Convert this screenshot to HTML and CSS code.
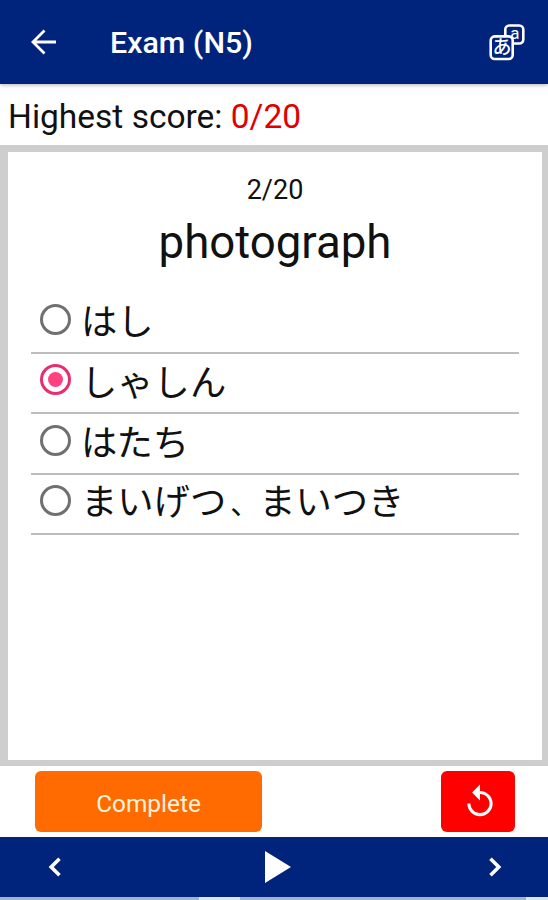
FILE: index.html
```html
<!DOCTYPE html>
<html lang="en">
<head>
<meta charset="utf-8">
<title>Exam (N5)</title>
<link rel="stylesheet" href="styles.css">
</head>
<body>
<div class="app">
  <header class="topbar">
    <svg class="back" width="26" height="26" viewBox="0 0 26 26"><path d="M25 13H2M13.500 1.500L2 13L13.500 24.500"/></svg>
    <h1 class="title">Exam (N5)</h1>
    <svg class="lang" width="36" height="37" viewBox="0 0 36 37">
      <rect class="box" x="16.3" y="1.5" width="18" height="18" rx="4"/>
      <text class="latin" x="25.800" y="15.300">a</text>
      <rect class="box front" x="1.7" y="12.4" width="22" height="22.6" rx="4"/>
      <text class="kana" x="12.9" y="30.300">あ</text>
    </svg>
  </header>
  <p class="score">Highest score: <span class="value">0/20</span></p>
  <main class="frame">
    <section class="card">
      <p class="count">2/20</p>
      <h2 class="word">photograph</h2>
      <ul class="options" lang="ja">
        <li class="option"><span class="radio"></span><span class="label">はし</span></li>
        <li class="option"><span class="radio checked"></span><span class="label">しゃしん</span></li>
        <li class="option"><span class="radio"></span><span class="label">はたち</span></li>
        <li class="option"><span class="radio"></span><span class="label">まいげつ<span class="comma">、</span>まいつき</span></li>
      </ul>
    </section>
  </main>
  <div class="actions">
    <button class="btn complete">Complete</button>
    <button class="btn reset" aria-label="Restart">
      <svg width="38" height="38" viewBox="0 0 24 24"><path fill="#fff" d="M12 5V1L7 6l5 5V7c3.310 0 6 2.690 6 6s-2.690 6-6 6-6-2.690-6-6H4c0 4.420 3.580 8 8 8s8-3.580 8-8-3.580-8-8-8z"/></svg>
    </button>
  </div>
  <nav class="bottombar">
    <svg class="prev" width="14" height="20" viewBox="0 0 14 20"><path d="M11.500 1.800L3.200 10l8.300 8.200"/></svg>
    <svg class="play" width="26" height="32" viewBox="0 0 26 32"><path d="M0 0L26 16L0 32z"/></svg>
    <svg class="next" width="14" height="20" viewBox="0 0 14 20"><path d="M2.500 1.800L10.800 10l-8.300 8.200"/></svg>
  </nav>
  <div class="edge"></div>
</div>
</body>
</html>
```
FILE: styles.css
```css
* { box-sizing: border-box; margin: 0; padding: 0; }
body { font-family: Roboto, "Noto Sans CJK JP", sans-serif; background: #fff; color: #111; }
.app { width: 548px; height: 900px; display: flex; flex-direction: column; overflow: hidden; }
.topbar { height: 84px; flex: none; display: flex; align-items: center; padding: 0 23px 0 31px; background: #00237b; color: #fff; box-shadow: 0 1px 4px rgba(0,0,0,.3); z-index: 1; }
.back { fill: none; stroke: #fff; stroke-width: 2.8; }
.title { flex: 1; margin-left: 53px; padding-top: 2px; font-size: 30.4px; line-height: 36px; font-weight: 500; }
.box { fill: none; stroke: #fff; stroke-width: 2.6; }
.front { fill: #00237b; }
.lang text { fill: #fff; text-anchor: middle; }
.latin { font: 17px Roboto, sans-serif; }
.kana { font: 500 19px "Noto Sans CJK JP", sans-serif; }
.score { height: 61px; flex: none; padding: 2px 0 0 8px; font-size: 33.5px; line-height: 61px; white-space: nowrap; }
.value { color: #e00000; }
.frame { height: 621px; flex: none; padding: 7px 6px 6px 8px; background: #cecece; }
.card { height: 100%; background: #fff; padding: 20px 23px 0; text-align: center; }
.count { font-size: 27px; line-height: 36px; }
.word { padding-top: 3px; font-size: 45.6px; line-height: 64px; font-weight: 400; }
.options { list-style: none; margin-top: 18px; text-align: left; }
.option { height: 60.5px; display: flex; align-items: center; padding: 0 0 6px 9px; border-bottom: 2px solid #bdbdbd; }
.radio { flex: none; width: 31px; height: 31px; border: 3px solid #707070; border-radius: 50%; }
.checked { display: grid; place-items: center; border-color: #e62e70; }
.checked::after { content: ""; width: 15px; height: 15px; border-radius: 50%; background: #ff4081; }
.label { margin-left: 10px; font-family: "Noto Sans CJK JP", sans-serif; font-size: 36.3px; line-height: 48px; white-space: nowrap; }
.comma { margin-left: 4px; font-size: 29px; }
.actions { height: 71px; flex: none; display: flex; justify-content: space-between; padding: 5px 33px 5px 35px; }
.btn { height: 61px; border: 0; border-radius: 6px; color: #fff; display: flex; align-items: center; justify-content: center; }
.complete { width: 227px; background: #ff6b00; font: 24.4px Roboto, sans-serif; padding-top: 3px; color: #fff3dc; }
.reset { width: 74px; background: #fe0000; padding-left: 3px; }
.bottombar { height: 60px; flex: none; display: flex; align-items: center; justify-content: space-between; padding: 0 46px 0 48px; background: #00237b; }
.prev, .next { fill: none; stroke: #fff; stroke-width: 3.6; }
.play { fill: #fff; margin-left: 5px; }
.edge { height: 3px; flex: none; background: linear-gradient(90deg, #a3b1cc 199px, #dfe4ee 199px 240px, #a3b1cc 240px 526px, #dfe4ee 526px); }
```
